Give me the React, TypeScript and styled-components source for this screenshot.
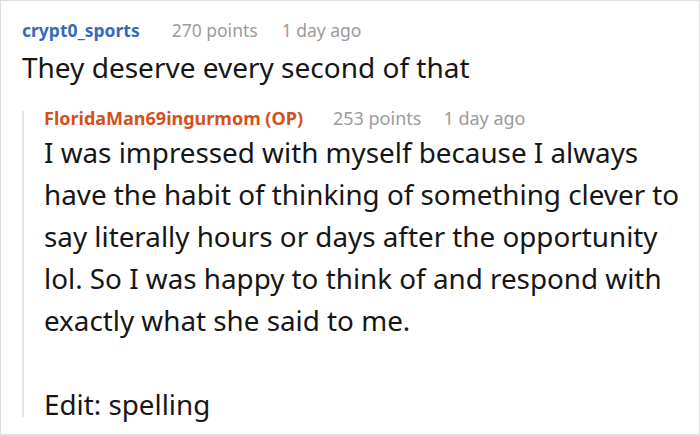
import React from 'react'
import styled, { createGlobalStyle } from 'styled-components'

const GlobalStyle = createGlobalStyle`
  html, body {
    margin: 0;
    padding: 0;
    background: #fff;
  }
  body {
    font-family: 'Noto Sans', 'Open Sans', sans-serif;
    color: #161616;
  }
`

const Frame = styled.section`
  box-sizing: border-box;
  width: 700px;
  height: 436px;
  border: 1px solid #dfdfdf;
  border-bottom-width: 2px;
  padding: 17px 0 0 21px;
  overflow: hidden;
`

const Comment = styled.article`
  display: flex;
  flex-direction: column;
`

const Meta = styled.header<{ $size: number; $lh: number; $gap: number }>`
  display: flex;
  align-items: baseline;
  gap: ${p => p.$gap}px;
  font-size: ${p => p.$size}px;
  line-height: ${p => p.$lh}px;
  color: #9b9b9b;
  white-space: nowrap;
`

const Author = styled.span<{ $op?: boolean }>`
  font-weight: 700;
  margin-right: 8px;
  color: ${p => (p.$op ? '#d3511c' : '#3769b9')};
`

const Stat = styled.span``

const Text = styled.p`
  margin: 5px 0 0;
  font-size: 28px;
  line-height: 40px;
`

const Replies = styled.div`
  margin-top: 24px;
  border-left: 2px solid #e4e4e4;
  padding-left: 20px;
`

const ReplyBody = styled.div`
  margin-top: 6px;
  width: 650px;
  font-size: 27.8px;
`

const Paragraph = styled.p<{ $tight?: boolean }>`
  margin: ${p => (p.$tight ? '50px 0 0' : '0')};
  line-height: ${p => (p.$tight ? 26 : 42)}px;
`

export default function App() {
  return (
    <>
      <GlobalStyle />
      <Frame>
        <Comment>
          <Meta $size={17.5} $lh={24} $gap={24}>
            <Author>crypt0_sports</Author>
            <Stat>270 points</Stat>
            <Stat>1 day ago</Stat>
          </Meta>
          <Text>They deserve every second of that</Text>
          <Replies>
            <Comment>
              <Meta $size={18} $lh={14} $gap={22}>
                <Author $op>FloridaMan69ingurmom (OP)</Author>
                <Stat>253 points</Stat>
                <Stat>1 day ago</Stat>
              </Meta>
              <ReplyBody>
                <Paragraph>
                  I was impressed with myself because I always have the habit of
                  thinking of something clever to say literally hours or days
                  after the opportunity lol. So I was happy to think of and
                  respond with exactly what she said to me.
                </Paragraph>
                <Paragraph $tight>Edit: spelling</Paragraph>
              </ReplyBody>
            </Comment>
          </Replies>
        </Comment>
      </Frame>
    </>
  )
}
